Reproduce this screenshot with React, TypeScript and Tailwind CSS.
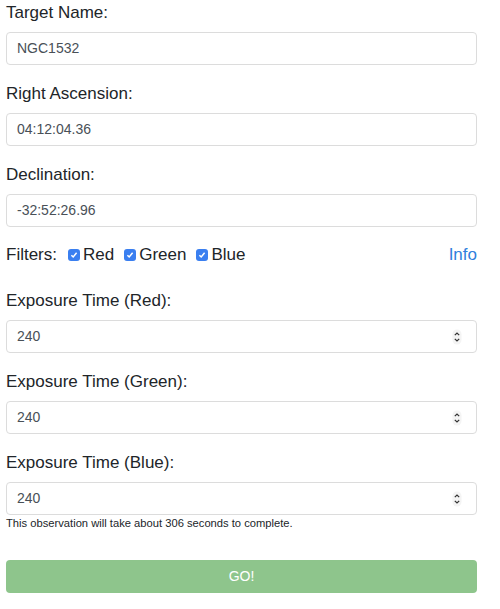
import { useState } from "react";

const font = { fontFamily: '"Liberation Sans", Arial, sans-serif' };

function Spinner() {
  return (
    <svg width="10" height="16" viewBox="0 0 10 16" className="shrink-0">
      <rect x="0.5" y="0.5" width="9" height="15" rx="4.5" fill="#f4f4f4" />
      <path d="M2.8 6.2 L5 4 L7.2 6.2" fill="none" stroke="#333" strokeWidth="1.2" />
      <path d="M2.8 9.8 L5 12 L7.2 9.8" fill="none" stroke="#333" strokeWidth="1.2" />
    </svg>
  );
}

function Field({
  label,
  value,
  number,
  last,
}: {
  label: string;
  value: string;
  number?: boolean;
  last?: boolean;
}) {
  return (
    <div className={last ? "" : "mb-[19px]"}>
      <div className="h-5 mb-[9px] text-[17px] leading-5 text-[#212529]">{label}</div>
      <div className="flex h-[33px] items-center rounded-[4px] border border-[#dcdcdc] bg-white pl-[10px] pr-[14px]">
        <span className="flex-1 text-[14px] text-[#495057]">{value}</span>
        {number && <Spinner />}
      </div>
    </div>
  );
}

function Check({ label }: { label: string }) {
  return (
    <label className="flex items-center gap-[3px]">
      <span className="flex h-3 w-3 items-center justify-center rounded-[3px] bg-[#3a7ff0]">
        <svg width="8" height="8" viewBox="0 0 8 8">
          <path d="M1.4 4.2 L3.2 6 L6.6 1.8" fill="none" stroke="#fff" strokeWidth="1.5" />
        </svg>
      </span>
      <span>{label}</span>
    </label>
  );
}

export default function App() {
  const [filters] = useState(["Red", "Green", "Blue"]);

  return (
    <div className="min-h-[609px] w-[500px] bg-white" style={font}>
      <div className="ml-[6px] w-[471px] pt-[3px]">
        <Field label="Target Name:" value="NGC1532" />
        <Field label="Right Ascension:" value="04:12:04.36" />
        <Field label="Declination:" value="-32:52:26.96" />

        <div className="-mt-[1px] mb-[26px] flex h-5 items-center text-[17px] leading-5 text-[#212529]">
          <span className="mr-[11px]">Filters:</span>
          <div className="flex items-center gap-[10px]">
            {filters.map((f) => (
              <Check key={f} label={f} />
            ))}
          </div>
          <a className="ml-auto text-[#2f7fdc]">Info</a>
        </div>

        <Field label="Exposure Time (Red):" value="240" number />
        <Field label="Exposure Time (Green):" value="240" number />
        <Field label="Exposure Time (Blue):" value="240" number last />

        <p className="mt-[1px] text-[11.2px] leading-[14px] text-[#212529]">
          This observation will take about 306 seconds to complete.
        </p>

        <button
          type="button"
          className="mt-[30px] flex h-[33px] w-full items-center justify-center rounded-[4px] bg-[#8ec58c] text-[14px] text-white"
        >
          GO!
        </button>
      </div>
    </div>
  );
}
